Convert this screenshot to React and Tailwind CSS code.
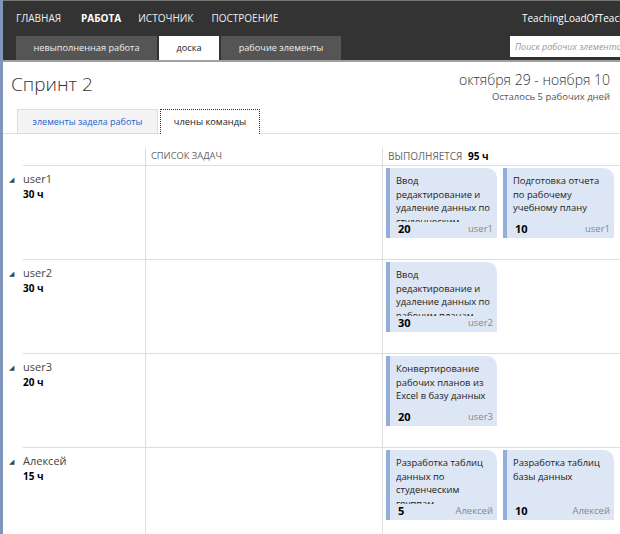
import React from 'react';

const font = { fontFamily: '"Open Sans", "Noto Sans", sans-serif' };

const rows = [
  {
    name: 'user1',
    hours: '30 ч',
    cards: [
      { text: 'Ввод редактирование и удаление данных по студенческим группам', n: 20, who: 'user1' },
      { text: 'Подготовка отчета по рабочему учебному плану', n: 10, who: 'user1' },
    ],
  },
  {
    name: 'user2',
    hours: '30 ч',
    cards: [{ text: 'Ввод редактирование и удаление данных по рабочим планам', n: 30, who: 'user2' }],
  },
  {
    name: 'user3',
    hours: '20 ч',
    cards: [{ text: 'Конвертирование рабочих планов из Excel в базу данных', n: 20, who: 'user3' }],
  },
  {
    name: 'Алексей',
    hours: '15 ч',
    cards: [
      { text: 'Разработка таблиц данных по студенческим группам', n: 5, who: 'Алексей' },
      { text: 'Разработка таблиц базы данных', n: 10, who: 'Алексей' },
    ],
  },
];

const Card = ({ text, n, who }) => (
  <div className="w-[111px] h-[70px] bg-[#dce6f4] border-l-4 border-[#92aed8] rounded-tr-[10px] flex flex-col pl-[6px] pr-[4px] pt-[6px]">
    <div className="h-[50px] overflow-hidden text-[9.4px] leading-[13.5px] text-[#222]">{text}</div>
    <div className="flex items-end justify-between mt-auto pb-[2px]">
      <span className="text-[11px] font-bold text-black leading-[14px] pl-[2px]">{n}</span>
      <span className="text-[9.5px] text-[#888] leading-[14px]">{who}</span>
    </div>
  </div>
);

export default function App() {
  return (
    <div style={font} className="w-[620px] h-[534px] overflow-hidden bg-white border-l-[3px] border-[#7f95bb]">
      {/* top bar */}
      <div className="bg-[#333333] h-[60px] border-t border-[#777] flex flex-col">
        <div className="h-[35px] flex items-center text-[10px] text-[#eee] pl-[13px]">
          <span className="mr-[20px]">ГЛАВНАЯ</span>
          <span className="mr-[17px] font-bold text-white">РАБОТА</span>
          <span className="mr-[18px]">ИСТОЧНИК</span>
          <span>ПОСТРОЕНИЕ</span>
          <span className="ml-auto text-[10px] text-white whitespace-nowrap w-[98px] overflow-hidden">TeachingLoadOfTeacher</span>
        </div>
        <div className="flex items-end h-[24px] pl-[13px] text-[9.2px]">
          <div className="h-[24px] w-[141px] bg-[#555555] text-[#eee] flex items-center justify-center">невыполненная работа</div>
          <div className="h-[24px] w-[60px] ml-[2px] bg-white text-[#222] flex items-center justify-center">доска</div>
          <div className="h-[24px] w-[120px] ml-[2px] bg-[#555555] text-[#eee] flex items-center justify-center">рабочие элементы</div>
          <div className="ml-auto mb-[3px] h-[21px] w-[110px] bg-white flex items-center pl-[5px] text-[9px] italic text-[#999] whitespace-nowrap overflow-hidden">
            Поиск рабочих элементов
          </div>
        </div>
      </div>
      <div className="h-[2px] bg-[#a0a0a0]" />

      {/* title */}
      <div className="flex justify-between pl-[8px] pr-[10px] pt-[8px] h-[48px]">
        <div className="text-[19px] font-light text-[#333] leading-[28px]">Спринт 2</div>
        <div className="flex flex-col items-end">
          <div className="text-[14px] font-light text-[#333] leading-[20px]">октября 29 - ноября 10</div>
          <div className="text-[9.5px] text-[#555] leading-[14px]">Осталось 5 рабочих дней</div>
        </div>
      </div>

      {/* tabs */}
      <div className="flex items-end pl-[14px] h-[24px] border-b border-[#ddd]">
        <div className="h-[24px] w-[141px] bg-[#f4f4f4] border border-b-0 border-[#ddd] text-[9px] text-[#1a5fd0] flex items-center justify-center">
          элементы задела работы
        </div>
        <div className="h-[25px] -mb-px w-[100px] ml-[2px] bg-white border border-dotted border-b-0 border-[#333] text-[9.3px] text-[#222] flex items-center justify-center">
          члены команды
        </div>
      </div>

      {/* board */}
      <div className="mt-[14px]">
        <div className="flex h-[18px] ml-[20px] border-b border-[#ddd] text-[10px] text-[#666]">
          <div className="w-[122px]" />
          <div className="w-[237px] border-l border-[#ddd] pl-[5px] leading-[16px] text-[9.3px]">СПИСОК ЗАДАЧ</div>
          <div className="flex-1 border-l border-[#ddd] pl-[5px] leading-[16px]">
            ВЫПОЛНЯЕТСЯ <span className="font-bold text-black ml-[3px]">95 ч</span>
          </div>
        </div>
        {rows.map((r) => (
          <div key={r.name} className="flex h-[94px]">
            <div className="w-[142px] flex flex-col pt-[5px] pl-[6px]">
              <div className="flex items-center">
                <span className="text-[7px] text-[#444] w-[14px] mt-[3px]">◢</span>
                <span className="text-[11px] text-[#444] leading-[16px]">{r.name}</span>
              </div>
              <div className="pl-[14px] text-[10px] font-bold text-black leading-[14px]">{r.hours}</div>
              <div className="mt-auto ml-[14px] border-b border-[#ddd]" />
            </div>
            <div className="w-[237px] border-l border-b border-[#ddd]" />
            <div className="flex-1 border-l border-b border-[#ddd] flex gap-[6px] pl-[3px] pt-[2px]">
              {r.cards.map((c, i) => (
                <Card key={i} {...c} />
              ))}
            </div>
          </div>
        ))}
      </div>
    </div>
  );
}
